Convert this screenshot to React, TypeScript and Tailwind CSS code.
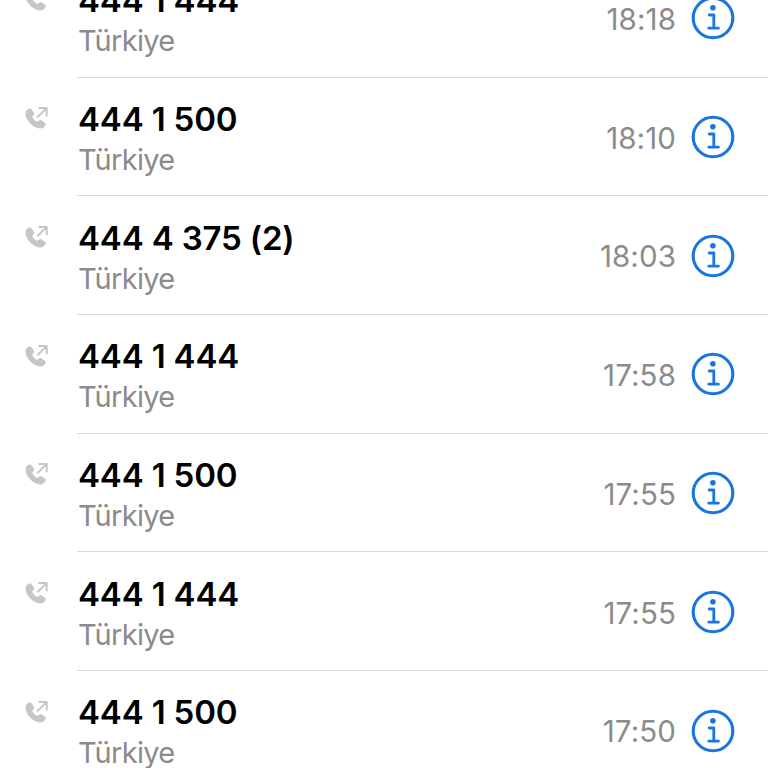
type Call = {
  number: string;
  region: string;
  time: string;
};

const calls: Call[] = [
  { number: "444 1 444", region: "Türkiye", time: "18:18" },
  { number: "444 1 500", region: "Türkiye", time: "18:10" },
  { number: "444 4 375 (2)", region: "Türkiye", time: "18:03" },
  { number: "444 1 444", region: "Türkiye", time: "17:58" },
  { number: "444 1 500", region: "Türkiye", time: "17:55" },
  { number: "444 1 444", region: "Türkiye", time: "17:55" },
  { number: "444 1 500", region: "Türkiye", time: "17:50" },
];

function OutgoingIcon() {
  return (
    <svg className="mt-[28.7px] ml-[25px] h-6 w-6 shrink-0" viewBox="0 0 24 24" fill="none">
      <path d="M5.2 2.6C2.8 2.6.5 4.8.5 7.8c0 6.5 8 14.6 14.6 14.6 3 0 5-1.8 5.5-3.7.2-.9 0-1.5-.7-2l-3.5-2.4c-.8-.5-1.6-.4-2.2.2l-1.2 1.1c-.4.3-.8.3-1.2.1-1.7-1-3.4-2.7-4.3-4.3-.2-.4-.2-.8.1-1.2l1.1-1.3c.6-.7.7-1.4.2-2.2L6.8 3.5C6.4 2.9 5.900 2.6 5.2 2.6Z" fill="#c6c6c7" />
      <path d="M12.8 10.8 21.5 2.1M14.3 2h7.4v7.4" stroke="#c6c6c7" strokeWidth="2" strokeLinecap="round" strokeLinejoin="round" />
    </svg>
  );
}

function InfoIcon() {
  return (
    <svg className="h-11 w-11" viewBox="0 0 44 44" fill="none" stroke="#1a75e3">
      <circle cx="22" cy="22" r="19.8" strokeWidth="3.1" />
      <circle cx="21.9" cy="11.8" r="2.8" fill="#1a75e3" stroke="none" />
      <path d="M18.2 19h4.6v13.2M17.8 32.2h9.6" strokeWidth="2.8" strokeLinecap="round" strokeLinejoin="round" />
    </svg>
  );
}

function CallRow({ call }: { call: Call }) {
  return (
    <li className="flex h-[118.7px] shrink-0">
      <OutgoingIcon />
      <div className="ml-7 flex flex-1 border-b border-[#dadadb]">
        <div className="flex-1 pt-[20.4px] pl-px">
          <p className="text-[33px] leading-[42px] font-semibold tracking-[-0.15px] text-black">{call.number}</p>
          <p className="text-[29px] leading-10 tracking-[-0.7px] text-[#8b8b8c]">{call.region}</p>
        </div>
        <time className="mt-[40.3px] text-[29.5px] leading-10 tracking-[0.1px] text-[#8b8b8c]">{call.time}</time>
        <button type="button" aria-label="Info" className="mt-[37.6px] mr-[33px] ml-[15px] h-11 w-11">
          <InfoIcon />
        </button>
      </div>
    </li>
  );
}

export default function App() {
  return (
    <main className="h-screen overflow-hidden bg-white font-['Inter',sans-serif]">
      <ul className="-mt-[41.2px] flex flex-col">
        {calls.map((call) => (
          <CallRow key={call.time + call.number} call={call} />
        ))}
      </ul>
    </main>
  );
}
